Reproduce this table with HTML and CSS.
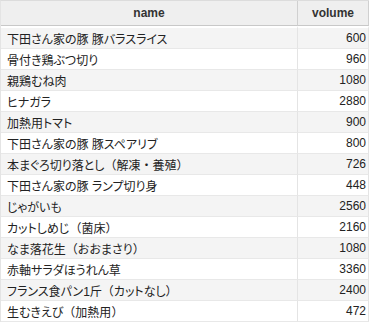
FILE: index.html
```html
<!DOCTYPE html>
<html lang="ja">
<head>
<meta charset="utf-8">
<link rel="stylesheet" href="styles.css">
</head>
<body>
<table class="grid">
  <colgroup><col class="col-name"><col class="col-vol"></colgroup>
  <thead>
    <tr><th class="h-name">name</th><th class="h-vol">volume</th></tr>
  </thead>
  <tbody>
    <tr><td class="c-name">下田さん家の豚 豚バラスライス</td><td class="c-vol">600</td></tr>
    <tr><td class="c-name">骨付き鶏ぶつ切り</td><td class="c-vol">960</td></tr>
    <tr><td class="c-name">親鶏むね肉</td><td class="c-vol">1080</td></tr>
    <tr><td class="c-name">ヒナガラ</td><td class="c-vol">2880</td></tr>
    <tr><td class="c-name">加熱用トマト</td><td class="c-vol">900</td></tr>
    <tr><td class="c-name">下田さん家の豚 豚スペアリブ</td><td class="c-vol">800</td></tr>
    <tr><td class="c-name">本まぐろ切り落とし<span class="fw">（</span>解凍<span class="fw">・</span>養殖<span class="fw">）</span></td><td class="c-vol">726</td></tr>
    <tr><td class="c-name">下田さん家の豚 ランプ切り身</td><td class="c-vol">448</td></tr>
    <tr><td class="c-name">じゃがいも</td><td class="c-vol">2560</td></tr>
    <tr><td class="c-name">カットしめじ<span class="fw">（</span>菌床<span class="fw">）</span></td><td class="c-vol">2160</td></tr>
    <tr><td class="c-name">なま落花生<span class="fw">（</span>おおまさり<span class="fw">）</span></td><td class="c-vol">1080</td></tr>
    <tr><td class="c-name">赤軸サラダほうれん草</td><td class="c-vol">3360</td></tr>
    <tr><td class="c-name">フランス食パン1斤<span class="fw">（</span>カットなし<span class="fw">）</span></td><td class="c-vol">2400</td></tr>
    <tr><td class="c-name">生むきえび<span class="fw">（</span>加熱用<span class="fw">）</span></td><td class="c-vol">472</td></tr>
  </tbody>
</table>
</body>
</html>
```
FILE: styles.css
```css
html, body {
  margin: 0;
  padding: 0;
  background: #ffffff;
}
body {
  font-family: "Liberation Sans", "Noto Sans CJK JP", sans-serif;
  font-size: 12px;
  color: #222222;
  font-feature-settings: "palt";
}
.fw {
  font-feature-settings: "palt" 0;
}
.grid {
  border-collapse: separate;
  border-spacing: 0;
  table-layout: fixed;
  width: 368px;
  border-top: 1px solid #dcdcdc;
  border-left: 1px solid #e4e4e4;
}
.col-name { width: 297px; }
.col-vol { width: 71px; }
.grid th {
  height: 24px;
  padding: 0;
  background: #efefef;
  font-weight: bold;
  color: #333333;
  text-align: center;
  border-bottom: 1px solid #c8c8c8;
  border-right: 1px solid #d0d0d0;
}
.grid td {
  height: 20px;
  padding: 0 2px 0 6px;
  border-bottom: 1px solid #e8e8e8;
  border-right: 1px solid #e4e4e4;
  white-space: nowrap;
  overflow: hidden;
}
.grid tbody tr:first-child td {
  border-top: 2px solid #ffffff;
}
.grid tbody tr:nth-child(odd) td {
  background: #f4f4f4;
}
.c-vol {
  text-align: right;
}
```
